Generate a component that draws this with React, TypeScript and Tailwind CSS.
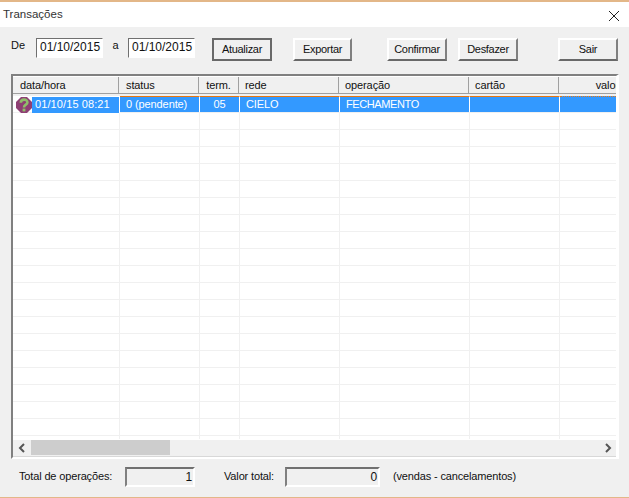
const columns = [
  { label: 'data/hora', head: 'w-[106px]', width: 'w-[107px]', headCell: 'pl-[7px]', cell: '' },
  { label: 'status', head: 'w-[80px]', width: 'w-[80px]', headCell: 'pl-[7px]', cell: 'pl-[6px]' },
  { label: 'term.', head: 'w-[40px]', width: 'w-[40px]', headCell: 'justify-center', cell: 'justify-center' },
  { label: 'rede', head: 'w-[100px]', width: 'w-[100px]', headCell: 'pl-[6px]', cell: 'pl-[6px]' },
  { label: 'operação', head: 'w-[130px]', width: 'w-[130px]', headCell: 'pl-[6px]', cell: 'pl-[6px]' },
  { label: 'cartão', head: 'w-[90px]', width: 'w-[90px]', headCell: 'pl-[6px]', cell: 'pl-[6px]' },
  { label: 'valor', head: 'w-[57px]', width: 'w-[56px]', headCell: 'justify-end', cell: 'justify-end' },
]

const emptyRows = Array.from({ length: 19 }, (_, i) => i)

function PendingIcon() {
  return (
    <svg width="16" height="16" viewBox="0 0 16 16" className="shrink-0">
      <polygon points="5,0 11,0 16,5 16,11 11,16 5,16 0,11 0,5" fill="#8e3f73" />
      <path d="M4.8 5.8 C4.8 1.6 11.4 1.6 11.4 5.4 C11.4 7.8 8 7.6 8 10.4" fill="none" stroke="#8fbf6a" strokeWidth="2.6" />
      <rect x="6.6" y="11.6" width="2.8" height="2.8" fill="#8fbf6a" />
    </svg>
  )
}

function ToolButton({ label, width, active }: { label: string; width: string; active?: boolean }) {
  const border = active
    ? 'border-2 border-[#696969]'
    : 'border-2 border-t-white border-l-white border-r-[#808080] border-b-[#696969]'
  return (
    <button className={`${width} h-[23px] ${border} bg-[#f0f0f0] text-[11px] tracking-[-0.3px] text-[#111] flex items-center justify-center`}>
      {label}
    </button>
  )
}

function DateInput({ value }: { value: string }) {
  return (
    <div className="w-[67px] h-[20px] border border-t-[#707070] border-l-[#707070] border-r-white border-b-white bg-white pl-[3px] text-[12px] leading-[17px] text-[#111]">
      {value}
    </div>
  )
}

function ReadonlyBox({ value, width }: { value: string; width: string }) {
  return (
    <div className={`${width} h-[20px] border-2 border-t-[#707070] border-l-[#808080] border-r-white border-b-white bg-[#f0f0f0] text-right pr-[1px] text-[12px] leading-[17px] text-[#111]`}>
      {value}
    </div>
  )
}

export default function App() {
  return (
    <div className="w-[629px] h-[498px] flex flex-col bg-[#f0f0f0] overflow-hidden text-[#111]" style={{ fontFamily: '"Liberation Sans", Arial, sans-serif' }}>
      <div className="h-[27px] shrink-0 flex items-center justify-between bg-white border-t-2 border-[#e3b788] pl-[3px] pr-[9px]">
        <span className="text-[11.5px] text-[#333]">Transações</span>
        <svg width="12" height="12" viewBox="0 0 12 12" className="mt-[2px]">
          <path d="M1 1 L11 11 M11 1 L1 11" stroke="#222" strokeWidth="1" fill="none" />
        </svg>
      </div>

      <div className="flex items-start h-[47px] shrink-0 pt-[11px] pl-[11px]">
        <span className="w-[25px] text-[11px] leading-[14px]">De</span>
        <DateInput value="01/10/2015" />
        <span className="w-[25px] text-center text-[11px] leading-[14px]">a</span>
        <DateInput value="01/10/2015" />
        <div className="ml-[17px] flex">
          <ToolButton label="Atualizar" width="w-[60px]" active />
          <div className="ml-[21px]"><ToolButton label="Exportar" width="w-[59px]" /></div>
          <div className="ml-[35px]"><ToolButton label="Confirmar" width="w-[60px]" /></div>
          <div className="ml-[11px]"><ToolButton label="Desfazer" width="w-[60px]" /></div>
          <div className="ml-[40px]"><ToolButton label="Sair" width="w-[60px]" /></div>
        </div>
      </div>

      <div className="mx-[11px] w-[608px] h-[385px] shrink-0 flex flex-col border-2 border-r-[3px] border-t-[#808080] border-l-[#808080] border-r-white border-b-white">
        <div className="h-[364px] bg-white flex flex-col overflow-hidden text-[11px] tracking-[-0.1px]">
          <div className="flex h-[19px] shrink-0 bg-[#f0f0f0] mt-[1px] pb-[2px]">
            {columns.map((c, i) => (
              <div key={c.label} className={`${c.head} shrink-0 flex items-center overflow-hidden border-b border-[#a0a0a0] ${i < 6 ? 'border-r' : ''} ${c.headCell}`}>
                <span className={i === 6 ? '-mr-[3px]' : ''}>{c.label}</span>
              </div>
            ))}
          </div>
          <div className="flex h-[17px] shrink-0 border-b border-[#f0f0f0]">
            {columns.map((c, i) => (
              <div key={c.label} className={`${c.width} shrink-0 flex items-center border-t border-dotted ${i === 0 ? 'bg-white border-transparent' : `bg-[#3399ff] border-t-[#e8760f] text-white ${c.cell}`} ${i < 6 && i > 0 ? 'border-r border-r-white border-solid' : ''}`}>
                {i === 0 && (
                  <div className="flex items-center w-full">
                    <div className="ml-[3px]"><PendingIcon /></div>
                    <span className="flex-1 h-[16px] bg-[#3399ff] border-r border-white pl-[3px] text-white tracking-[0.1px] leading-[15px]">01/10/15 08:21</span>
                  </div>
                )}
                {i === 1 && '0 (pendente)'}
                {i === 2 && '05'}
                {i === 3 && 'CIELO'}
                {i === 4 && <span className="tracking-[-0.4px]">FECHAMENTO</span>}
              </div>
            ))}
          </div>
          {emptyRows.map((r) => (
            <div key={r} className="flex h-[17px] shrink-0 border-b border-[#f0f0f0]">
              {columns.map((c, i) => (
                <div key={c.label} className={`${c.width} shrink-0 ${i < 6 ? 'border-r border-[#f0f0f0]' : ''}`} />
              ))}
            </div>
          ))}
          <div className="flex h-[3px] shrink-0">
            {columns.map((c, i) => (
              <div key={c.label} className={`${c.width} shrink-0 ${i < 6 ? 'border-r border-[#f0f0f0]' : ''}`} />
            ))}
          </div>
        </div>
        <div className="h-[17px] shrink-0 flex items-start bg-[#f0f0f0] border-b border-[#d8d8d8]">
          <div className="w-[18px] h-[15px] flex items-center justify-center">
            <svg width="8" height="10" viewBox="0 0 8 10"><path d="M6 1 L2 5 L6 9" fill="none" stroke="#555" strokeWidth="2" /></svg>
          </div>
          <div className="w-[139px] h-[15px] bg-[#cdcdcd]" />
          <div className="flex-1" />
          <div className="w-[17px] h-[15px] flex items-center justify-center">
            <svg width="8" height="10" viewBox="0 0 8 10"><path d="M2 1 L6 5 L2 9" fill="none" stroke="#555" strokeWidth="2" /></svg>
          </div>
        </div>
      </div>

      <div className="flex items-start h-[20px] mt-[8px] pl-[19px] text-[11px] tracking-[-0.15px] leading-[18px]">
        <span className="w-[106px]">Total de operações:</span>
        <ReadonlyBox value="1" width="w-[70px]" />
        <span className="ml-[29px] w-[61px]">Valor total:</span>
        <ReadonlyBox value="0" width="w-[95px]" />
        <span className="ml-[13px]">(vendas - cancelamentos)</span>
      </div>
      <div className="mt-auto h-[1px] shrink-0 bg-[#e3b788]" />
    </div>
  )
}
